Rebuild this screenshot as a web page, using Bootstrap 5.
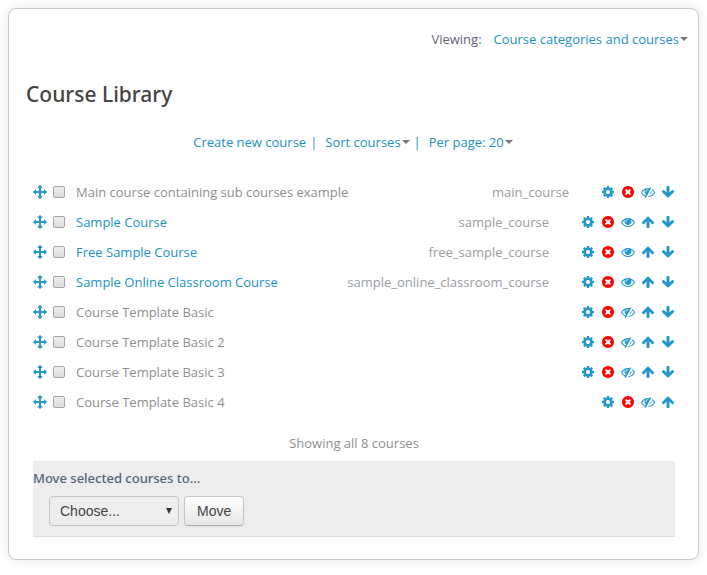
<!DOCTYPE html>
<html lang="en">
<head>
<meta charset="utf-8">
<meta name="viewport" content="width=device-width, initial-scale=1">
<title>Course Library</title>
<link href="https://cdn.jsdelivr.net/npm/bootstrap@5.3.0/dist/css/bootstrap.min.css" rel="stylesheet">
<style>
body{background:#fff;color:#5f6673;font:13px/20px "Open Sans","Noto Sans",sans-serif}
a{color:#2191c4;text-decoration:none}
.panel{margin:8px;padding:20px 10px 22px 17px;border:1px solid #c9c9c9;border-radius:8px;box-shadow:0 0 12px rgba(0,0,0,.1)}
.page-title{font-family:"Noto Sans",sans-serif;font-size:21px;line-height:32px;font-weight:500;color:#444;margin:29px 0 22px}
.drop::after{color:#777;margin-left:1px;vertical-align:3px;border-top-width:4px;border-left-width:4px;border-right-width:4px}
.tools{color:#2191c4;padding-right:8px}
.inner{margin:0 13px 0 7px}
.course-list{margin-top:25px}
.course-row{height:30px}
.dim,.dim a{color:#8f8f8f}
.code{color:#9a9da3}
.ico{width:14px;height:14px;fill:#2497cb;display:block}
.ico-del{fill:#f00}
.actions{gap:6px;margin-left:32px}
.pick{appearance:none;width:12px;height:12px;margin:0 11px 0 6px;border:1px solid #a5a5a5;border-radius:2px;background:linear-gradient(#eee,#dcdcdc)}
.pick:checked{background:#2497cb}
.total{color:#8f8f8f;padding:16px 0 8px}
.move-box{background:#ededed;border-bottom:1px solid #dcdcdc;padding:7px 0 10px}
.move-box label{font-family:"Noto Sans",sans-serif;color:#53657a;font-weight:500}
.move-controls{gap:5px;padding:8px 0 0 16px}
.ctl{font:14px/20px "Liberation Sans",Arial,sans-serif;color:#444;height:30px;border:1px solid #c6c6c6;border-radius:4px}
.pick-target{width:130px;padding:0 10px;appearance:none;background:#ededed url("data:image/svg+xml,%3Csvg xmlns='http://www.w3.org/2000/svg' width='6' height='6'%3E%3Cpath d='M0 0h6L3 6z' fill='%23333'/%3E%3C/svg%3E") no-repeat right 6px center}
.btn-move{padding:0 12px;background:linear-gradient(#fff,#e6e6e6);border-bottom-color:#aaa;box-shadow:0 1px 2px rgba(0,0,0,.05)}
</style>
</head>
<body>
<svg class="d-none" aria-hidden="true">
<symbol id="cog" viewBox="0 0 1792 1792"><path d="M1152 896q0-106-75-181t-181-75-181 75-75 181 75 181 181 75 181-75 75-181zm512-109v222q0 12-8 23t-20 13l-185 28q-19 54-39 91 35 50 107 138 10 12 10 25t-9 23q-27 37-99 108t-94 71q-12 0-26-9l-138-108q-44 23-91 38-16 136-29 186-7 28-36 28h-222q-14 0-24.5-8.5t-11.5-21.5l-28-184q-49-16-90-37l-141 107q-10 9-25 9-14 0-25-11-126-114-165-168-7-10-7-23 0-12 8-23 15-21 51-66.5t54-70.5q-27-50-41-99l-183-27q-13-2-21-12.5t-8-23.5v-222q0-12 8-23t19-13l186-28q14-46 39-92-40-57-107-138-10-12-10-24 0-10 9-23 26-36 98.5-107.5t94.5-71.5q13 0 26 10l138 107q44-23 91-38 16-136 29-186 7-28 36-28h222q14 0 24.5 8.5t11.5 21.5l28 184q49 16 90 37l142-107q9-9 24-9 13 0 25 10 129 119 165 170 7 8 7 22 0 12-8 23-15 21-51 66.5t-54 70.5q26 50 41 98l183 28q13 2 21 12.5t8 23.5z"/></symbol>
<symbol id="del" viewBox="0 0 1792 1792"><path d="M1277 1122q0-26-19-45l-181-181 181-181q19-19 19-45 0-27-19-46l-90-90q-19-19-46-19-26 0-45 19l-181 181-181-181q-19-19-45-19-27 0-46 19l-90 90q-19 19-19 46 0 26 19 45l181 181-181 181q-19 19-19 45 0 27 19 46l90 90q19 19 46 19 26 0 45-19l181-181 181 181q19 19 45 19 27 0 46-19l90-90q19-19 19-46zm387-226q0 209-103 385.5t-279.5 279.5-385.5 103-385.5-103-279.5-279.5-103-385.5 103-385.5 279.5-279.5 385.5-103 385.5 103 279.5 279.5 103 385.5z"/></symbol>
<symbol id="eye" viewBox="0 0 1792 1792"><path d="M1664 960q-152-236-381-353 61 104 61 225 0 185-131.5 316.5t-316.5 131.5-316.5-131.5-131.5-316.5q0-121 61-225-229 117-381 353 133 205 333.5 326.5t434.5 121.5 434.5-121.5 333.5-326.5zm-720-384q0-20-14-34t-34-14q-125 0-214.5 89.5t-89.5 214.5q0 20 14 34t34 14 34-14 14-34q0-86 61-147t147-61q20 0 34-14t14-34zm848 384q0 34-20 69-140 230-376.5 368.5t-499.5 138.5-499.5-139-376.5-368q-20-35-20-69t20-69q140-229 376.5-368t499.5-139 499.5 139 376.5 368q20 35 20 69z"/></symbol>
<symbol id="hid" viewBox="0 0 1792 1792"><path d="M555 1335l78-141q-87-63-136-159t-49-203q0-121 61-225-229 117-381 353 167 258 427 375zm389-759q0-20-14-34t-34-14q-125 0-214.5 89.5t-89.5 214.5q0 20 14 34t34 14 34-14 14-34q0-86 61-147t147-61q20 0 34-14t14-34zm363-191q0 7-1 9-106 189-316 567t-315 566l-49 89q-10 16-28 16-12 0-134-70-16-10-16-28 0-12 44-87-143-65-263.5-173t-208.5-245q-20-31-20-69t20-69q153-235 380-371t496-136q89 0 180 17l54-97q10-16 28-16 5 0 18 6t31 15.5 33 18.5 31.5 18.5 19.5 11.5q16 10 16 27zm37 447q0 139-79 253.5t-209 164.5l280-502q8 45 8 84zm448 128q0 35-20 69-39 64-109 145-150 172-347.5 267t-419.5 95l74-132q212-18 392.5-137t301.5-307q-115-179-282-294l63-112q95 64 182.5 153t144.5 184q20 34 20 69z"/></symbol>
<symbol id="up" viewBox="0 0 1792 1792"><path d="M1675 971q0 51-37 90l-75 75q-38 38-91 38-54 0-90-38l-294-293v704q0 52-37.5 84.5t-90.5 32.5h-128q-53 0-90.5-32.5t-37.5-84.5v-704l-294 293q-36 38-90 38t-90-38l-75-75q-38-38-38-90 0-53 38-91l651-651q35-37 90-37 54 0 91 37l651 651q37 39 37 91z"/></symbol>
<symbol id="down" viewBox="0 0 1792 1792"><path d="M1675 832q0 53-37 90l-651 652q-39 37-91 37-53 0-90-37l-651-652q-38-36-38-90 0-53 38-91l74-75q39-37 91-37 53 0 90 37l294 294v-704q0-52 38-90t90-38h128q52 0 90 38t38 90v704l294-294q37-37 90-37 52 0 91 37l75 75q37 39 37 91z"/></symbol>
<symbol id="drag" viewBox="0 0 1792 1792"><path d="M1792 896q0 26-19 45l-256 256q-19 19-45 19t-45-19-19-45v-128h-384v384h128q26 0 45 19t19 45-19 45l-256 256q-19 19-45 19t-45-19l-256-256q-19-19-19-45t19-45 45-19h128v-384h-384v128q0 26-19 45t-45 19-45-19l-256-256q-19-19-19-45t19-45l256-256q19-19 45-19t45 19 19 45v128h384v-384h-128q-26 0-45-19t-19-45 19-45l256-256q19-19 45-19t45 19l256 256q19 19 19 45t-19 45-45 19h-128v384h384v-128q0-26 19-45t45-19 45 19l256 256q19 19 19 45z"/></symbol>
</svg>
<main class="panel">
<div class="d-flex justify-content-end"><span class="me-2 pe-1">Viewing:</span><a href="#" class="drop dropdown-toggle">Course categories and courses</a></div>
<h1 class="page-title">Course Library</h1>
<nav class="tools d-flex justify-content-center" aria-label="Course tools"><a href="#">Create new course</a><span class="ms-1 me-2">|</span><a href="#" class="drop dropdown-toggle">Sort courses</a><span class="ms-1 me-2">|</span><a href="#" class="drop dropdown-toggle">Per page: 20</a></nav>
<div class="inner">
<ul class="course-list list-unstyled mb-0" id="courses"></ul>
<div class="total text-center">Showing all 8 courses</div>
<form class="move-box">
<label for="target" class="d-block">Move selected courses to...</label>
<div class="move-controls d-flex"><select id="target" class="ctl pick-target"><option>Choose...</option></select><button type="button" class="ctl btn-move">Move</button></div>
</form>
</div>
</main>
<script src="https://cdn.jsdelivr.net/npm/bootstrap@5.3.0/dist/js/bootstrap.bundle.min.js"></script>
<script>
const courses = [
  ['Main course containing sub courses example', 'main_course', 'cog del hid down'],
  ['Sample Course', 'sample_course', 'cog del eye up down'],
  ['Free Sample Course', 'free_sample_course', 'cog del eye up down'],
  ['Sample Online Classroom Course', 'sample_online_classroom_course', 'cog del eye up down'],
  ['Course Template Basic', '', 'cog del hid up down'],
  ['Course Template Basic 2', '', 'cog del hid up down'],
  ['Course Template Basic 3', '', 'cog del hid up down'],
  ['Course Template Basic 4', '', 'cog del hid up']
];
const labels = {cog: 'Edit', del: 'Delete', eye: 'Hide', hid: 'Show', up: 'Move up', down: 'Move down', drag: 'Drag'};
const icon = n => `<a href="#" aria-label="${labels[n]}"><svg class="ico ico-${n}"><use href="#${n}"/></svg></a>`;
document.getElementById('courses').innerHTML = courses.map(([name, code, acts]) =>
  `<li class="course-row d-flex align-items-center${acts.includes('hid') ? ' dim' : ''}">${icon('drag')}<input type="checkbox" class="pick" aria-label="Select ${name}"><a href="#">${name}</a><span class="code ms-auto">${code}</span><div class="actions d-flex">${acts.split(' ').map(icon).join('')}</div></li>`).join('');
</script>
</body>
</html>
